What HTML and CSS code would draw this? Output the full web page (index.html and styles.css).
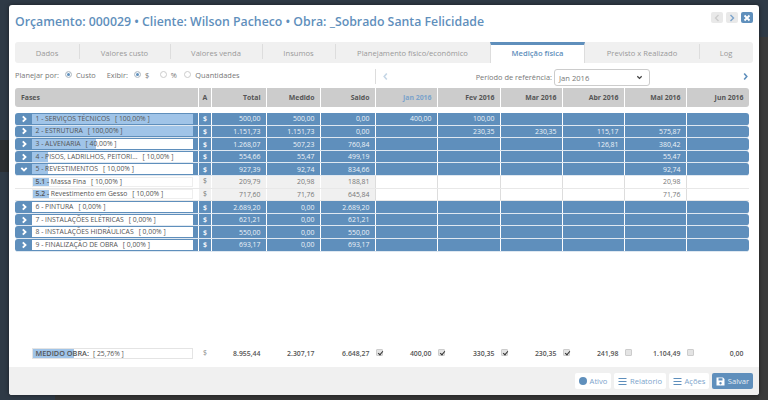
FILE: index.html
```html
<!DOCTYPE html>
<html lang="pt">
<head>
    <meta charset="UTF-8">
    <title>Orçamento</title>
    <link rel="stylesheet" href="styles.css">
</head>
<body>
    <div class="modal">
        <div class="modal-head">
            <h1 class="title">Orçamento: 000029 • Cliente: Wilson Pacheco • Obra: _Sobrado Santa Felicidade</h1>
            <div class="head-btns">
                <span class="hbtn off"><svg viewBox="0 0 8 8"><path d="M5.500 1 2.500 4l3 3" /></svg></span>
                <span class="hbtn"><svg viewBox="0 0 8 8"><path d="M2.500 1l3 3-3 3" /></svg></span>
                <span class="hbtn close"><svg viewBox="0 0 8 8"><path d="M1.500 1.500l5 5M6.500 1.500l-5 5" /></svg></span>
            </div>
        </div>

        <ul class="tabs">
            <li class="t1">Dados</li>
            <li class="t2">Valores custo</li>
            <li class="t3">Valores venda</li>
            <li class="t4">Insumos</li>
            <li class="t5">Planejamento físico/econômico</li>
            <li class="t6 current">Medição física</li>
            <li class="t7">Previsto x Realizado</li>
            <li class="t8">Log</li>
        </ul>

        <div class="options">
            <div class="opts-left">
                <span>Planejar por:</span>
                <span class="radio on"></span><span class="opt-custo">Custo</span>
                <span>Exibir:</span>
                <span class="radio on"></span><span class="opt-din">$</span>
                <span class="radio"></span><span class="opt-pct">%</span>
                <span class="radio"></span><span>Quantidades</span>
            </div>
            <div class="opts-right">
                <svg class="nav off" viewBox="0 0 8 10"><path d="M5.500 1.500 2.500 5l3 3.500" /></svg>
                <span class="periodo">Período de referência:</span>
                <span class="select">Jan 2016<svg viewBox="0 0 8 8"><path d="M1.500 2.500 4 5l2.500-2.500" /></svg></span>
                <svg class="nav" viewBox="0 0 8 10"><path d="M2.500 1.500l3 3.500-3 3.500" /></svg>
            </div>
        </div>

        <div class="grid head-row">
            <div class="fases">Fases</div>
            <div class="c-a">A</div>
            <div>Total</div>
            <div>Medido</div>
            <div>Saldo</div>
            <div class="month-now">Jan 2016</div>
            <div>Fev 2016</div>
            <div>Mar 2016</div>
            <div>Abr 2016</div>
            <div>Mai 2016</div>
            <div>Jun 2016</div>
        </div>

        <div class="rows">
            <div class="grid row">
                <div class="fases"><span class="toggle"><svg viewBox="0 0 8 8"><path d="M2.800 1.300 5.500 4 2.800 6.700" /></svg></span><span class="bar"><span class="fill" style="width:100%"></span><span class="label">1 - SERVIÇOS TÉCNICOS<i>[ 100,00% ]</i></span></span></div>
                <div class="c-a">$</div><div>500,00</div><div>500,00</div><div>0,00</div><div>400,00</div><div>100,00</div><div></div><div></div><div></div><div></div>
            </div>
            <div class="grid row">
                <div class="fases"><span class="toggle"><svg viewBox="0 0 8 8"><path d="M2.800 1.300 5.500 4 2.800 6.700" /></svg></span><span class="bar"><span class="fill" style="width:100%"></span><span class="label">2 - ESTRUTURA<i>[ 100,00% ]</i></span></span></div>
                <div class="c-a">$</div><div>1.151,73</div><div>1.151,73</div><div>0,00</div><div></div><div>230,35</div><div>230,35</div><div>115,17</div><div>575,87</div><div></div>
            </div>
            <div class="grid row">
                <div class="fases"><span class="toggle"><svg viewBox="0 0 8 8"><path d="M2.800 1.300 5.500 4 2.800 6.700" /></svg></span><span class="bar"><span class="fill" style="width:40%"></span><span class="label">3 - ALVENARIA<i>[ 40,00% ]</i></span></span></div>
                <div class="c-a">$</div><div>1.268,07</div><div>507,23</div><div>760,84</div><div></div><div></div><div></div><div>126,81</div><div>380,42</div><div></div>
            </div>
            <div class="grid row">
                <div class="fases"><span class="toggle"><svg viewBox="0 0 8 8"><path d="M2.800 1.300 5.500 4 2.800 6.700" /></svg></span><span class="bar"><span class="fill" style="width:10%"></span><span class="label">4 - PISOS, LADRILHOS, PEITORI...<i>[ 10,00% ]</i></span></span></div>
                <div class="c-a">$</div><div>554,66</div><div>55,47</div><div>499,19</div><div></div><div></div><div></div><div></div><div>55,47</div><div></div>
            </div>
            <div class="grid row">
                <div class="fases"><span class="toggle"><svg viewBox="0 0 8 8"><path d="M1.300 2.800 4 5.500 6.700 2.800" /></svg></span><span class="bar"><span class="fill" style="width:10%"></span><span class="label">5 - REVESTIMENTOS<i>[ 10,00% ]</i></span></span></div>
                <div class="c-a">$</div><div>927,39</div><div>92,74</div><div>834,66</div><div></div><div></div><div></div><div></div><div>92,74</div><div></div>
            </div>
            <div class="grid row sub">
                <div class="fases"><span class="bar"><span class="fill" style="width:10%"></span><span class="label"><b>5.1 -</b> Massa Fina<i>[ 10,00% ]</i></span></span></div>
                <div class="c-a">$</div><div>209,79</div><div>20,98</div><div>188,81</div><div></div><div></div><div></div><div></div><div>20,98</div><div></div>
            </div>
            <div class="grid row sub">
                <div class="fases"><span class="bar"><span class="fill" style="width:10%"></span><span class="label"><b>5.2 -</b> Revestimento em Gesso<i>[ 10,00% ]</i></span></span></div>
                <div class="c-a">$</div><div>717,60</div><div>71,76</div><div>645,84</div><div></div><div></div><div></div><div></div><div>71,76</div><div></div>
            </div>
            <div class="grid row">
                <div class="fases"><span class="toggle"><svg viewBox="0 0 8 8"><path d="M2.800 1.300 5.500 4 2.800 6.700" /></svg></span><span class="bar"><span class="label">6 - PINTURA<i>[ 0,00% ]</i></span></span></div>
                <div class="c-a">$</div><div>2.689,20</div><div>0,00</div><div>2.689,20</div><div></div><div></div><div></div><div></div><div></div><div></div>
            </div>
            <div class="grid row">
                <div class="fases"><span class="toggle"><svg viewBox="0 0 8 8"><path d="M2.800 1.300 5.500 4 2.800 6.700" /></svg></span><span class="bar"><span class="label">7 - INSTALAÇÕES ELÉTRICAS<i>[ 0,00% ]</i></span></span></div>
                <div class="c-a">$</div><div>621,21</div><div>0,00</div><div>621,21</div><div></div><div></div><div></div><div></div><div></div><div></div>
            </div>
            <div class="grid row">
                <div class="fases"><span class="toggle"><svg viewBox="0 0 8 8"><path d="M2.800 1.300 5.500 4 2.800 6.700" /></svg></span><span class="bar"><span class="label">8 - INSTALAÇÕES HIDRÁULICAS<i>[ 0,00% ]</i></span></span></div>
                <div class="c-a">$</div><div>550,00</div><div>0,00</div><div>550,00</div><div></div><div></div><div></div><div></div><div></div><div></div>
            </div>
            <div class="grid row">
                <div class="fases"><span class="toggle"><svg viewBox="0 0 8 8"><path d="M2.800 1.300 5.500 4 2.800 6.700" /></svg></span><span class="bar"><span class="label">9 - FINALIZAÇÃO DE OBRA<i>[ 0,00% ]</i></span></span></div>
                <div class="c-a">$</div><div>693,17</div><div>0,00</div><div>693,17</div><div></div><div></div><div></div><div></div><div></div><div></div>
            </div>
        </div>

        <div class="grid total-row">
            <div class="fases"><span class="bar"><span class="fill" style="width:25.76%"></span><span class="label"><b>MEDIDO OBRA:</b><i>[ 25,76% ]</i></span></span></div>
            <div class="c-a">$</div>
            <div>8.955,44</div>
            <div>2.307,17</div>
            <div class="has-check">6.648,27<span class="check on"></span></div>
            <div class="has-check">400,00<span class="check on"></span></div>
            <div class="has-check">330,35<span class="check on"></span></div>
            <div class="has-check">230,35<span class="check on"></span></div>
            <div class="has-check">241,98<span class="check"></span></div>
            <div class="has-check">1.104,49<span class="check"></span></div>
            <div>0,00</div>
        </div>

        <div class="modal-foot">
            <span class="btn b-ativo"><span class="dot"></span>Ativo</span>
            <span class="btn b-rel"><svg viewBox="0 0 9 8"><path d="M.5 1h8M.5 4h8M.5 7h8" /></svg>Relatorio</span>
            <span class="btn b-acoes"><svg viewBox="0 0 9 8"><path d="M.5 1h8M.5 4h8M.5 7h8" /></svg>Ações</span>
            <span class="btn save"><svg viewBox="0 0 9 9"><path class="solid" d="M1 .5h6l1.500 1.500v6.500h-8v-8zM2.500 1.200v2.300h4V1.200zM4.500 5a1.200 1.200 0 1 0 .01 0z" /></svg>Salvar</span>
        </div>
    </div>
</body>
</html>
```

FILE: styles.css
```css
*{
    margin: 0;
    padding: 0;
    box-sizing: border-box;
}

ul{
    list-style-type: none;
}

body{
    width: 768px;
    height: 400px;
    overflow: hidden;
    background:
        linear-gradient(#3a3a3a, #3a3a3a) right 37px / 9px 100% no-repeat,
        linear-gradient(#353535, #353535) right bottom / 713px 5px no-repeat,
        linear-gradient(#2b2e31, #2b2e31) 0 140px / 9px 32px no-repeat,
        #2f3a46;
    font-family: "Open Sans", "Liberation Sans", sans-serif;
    font-size: 7.400px;
    color: #666;
    padding: 5px 0 0 9px;
}

.modal{
    width: 750px;
    height: 390px;
    background: #fff;
    border-radius: 3px;
    box-shadow: 0 0 4px rgba(0,0,0,.5);
    display: flex;
    flex-direction: column;
    overflow: hidden;
}

/* cabeçalho */
.modal-head{
    height: 37px;
    padding: 4px 6px 0 6px;
    display: flex;
    justify-content: space-between;
}

.title{
    font-size: 12.300px;
    font-weight: 600;
    color: #5f8fbc;
    line-height: 26px;
    white-space: nowrap;
}

.head-btns{
    display: flex;
    gap: 3px;
    padding-top: 3px;
}

.hbtn{
    width: 12px;
    height: 11px;
    background: #e9e9e9;
    border-radius: 2px;
    display: flex;
    align-items: center;
    justify-content: center;
}

.hbtn svg{
    width: 8px;
    height: 8px;
    fill: none;
    stroke: #7ba3cb;
    stroke-width: 1.400;
}

.hbtn.off svg{
    stroke: #ccc;
}

.hbtn.close{
    background: #5f8fbc;
}

.hbtn.close svg{
    stroke: #fff;
    stroke-width: 1.800;
}

/* abas */
.tabs{
    margin: 0 6px;
    width: 738px;
    height: 21px;
    background: #f0f0f0;
    border-radius: 3px;
    display: flex;
    font-size: 7.600px;
    color: #999;
    flex: none;
}

.tabs li{
    display: flex;
    align-items: center;
    justify-content: center;
    position: relative;
}

.tabs li + li:not(.current):not(.t7)::before{
    content: "";
    position: absolute;
    left: 0;
    top: 2px;
    bottom: 4px;
    width: 1px;
    background: #ddd;
}

.t1{ width: 64px; }
.t2{ width: 91px; }
.t3{ width: 92px; }
.t4{ width: 73px; }
.t5{ width: 155px; }
.t6{ width: 95px; }
.t7{ width: 114px; }
.t8{ width: 54px; }

.tabs li.current{
    background: #fff;
    border-top: 3px solid #5f8fbc;
    border-left: 1px solid #ddd;
    border-right: 1px solid #ddd;
    padding-bottom: 2px;
    color: #5f8fbc;
    font-weight: 600;
}

/* opções */
.options{
    height: 25px;
    padding: 6px 4px 0 6px;
    display: flex;
    color: #777;
    flex: none;
}

.opts-left{
    width: 360px;
    height: 11px;
    display: flex;
    align-items: center;
    white-space: nowrap;
}

.radio{
    width: 7px;
    height: 7px;
    border: 1px solid #ccc;
    border-radius: 50%;
    background: #fff;
    margin: 0 4px 0 6px;
}

.radio.on{
    box-shadow: inset 0 0 0 1px #fff;
    background: #5f8fbc;
}

.opt-custo{
    margin-right: 11px;
}

.opt-din{
    margin-right: 4.500px;
}

.opt-pct{
    margin-right: 1.500px;
}

.opts-right{
    flex: 1;
    height: 15px;
    border-left: 1px solid #ddd;
    display: flex;
    align-items: center;
    padding: 0 6px 0 6px;
}

.nav{
    width: 7px;
    height: 9px;
    fill: none;
    stroke: #5f8fbc;
    stroke-width: 1.800;
}

.nav.off{
    stroke: #c5d6e6;
}

.periodo{
    margin-left: auto;
    margin-right: 2px;
}

.select{
    width: 96px;
    height: 17px;
    border: 1px solid #ccc;
    border-radius: 3px;
    background: #fff;
    font-size: 7.600px;
    padding: 0 6px 0 4px;
    margin: 2px 92px 0 0;
    display: flex;
    align-items: center;
    justify-content: space-between;
}

.select svg{
    width: 7px;
    height: 7px;
    fill: none;
    stroke: #444;
    stroke-width: 1.500;
}

/* tabela */
.grid{
    display: grid;
    grid-template-columns: 183px 13px 55px 54px 55px 62px 63px 62px 62px 62px 63px;
    margin-left: 6px;
    width: 734px;
    font-size: 6.900px;
    flex: none;
}

.grid > div{
    display: flex;
    align-items: center;
    justify-content: flex-end;
    padding-right: 5.500px;
    white-space: nowrap;
    border-left: 1px solid #fff;
}

.grid > .fases{
    justify-content: flex-start;
    border-left: 0;
    padding-right: 0;
}

.grid > .c-a{
    justify-content: center;
    padding-right: 0;
}

.head-row{
    height: 19px;
    background: #ccc;
    border-radius: 3px;
    color: #555;
    font-weight: 700;
}

.head-row .fases{
    padding-left: 6px;
}

.head-row .month-now{
    color: #7ba3cb;
}

.rows{
    margin-top: 6px;
    flex: 1;
}

.row{
    height: 12.620px;
    background: #5f8fbc;
    border-bottom: 1px solid #dfe8f1;
    border-radius: 3px;
    color: #eef3f8;
}

.row > .c-a{
    font-weight: 700;
}

.toggle{
    width: 17px;
    display: flex;
    justify-content: center;
}

.toggle svg{
    width: 8px;
    height: 8px;
    fill: none;
    stroke: #fff;
    stroke-width: 1.900;
}

.bar{
    width: 161px;
    height: 10px;
    background: #fff;
    position: relative;
    display: block;
    color: #555;
    flex: none;
    font-size: 6.800px;
}

.fill{
    position: absolute;
    left: 0;
    top: 0;
    bottom: 0;
    background: #a0c4e8;
}

.label{
    position: relative;
    padding-left: 3.500px;
    line-height: 10px;
    display: block;
}

.label i{
    font-style: normal;
    margin-left: 5px;
}

.label b{
    font-weight: 600;
}

.sub{
    background: #fff;
    border-radius: 0;
    border-bottom: 1px solid #e8e8e8;
    color: #777;
}

.sub .fases{
    padding-left: 17px;
}

.sub .bar{
    border: 1px solid #eee;
}

.sub .label{
    line-height: 8px;
    padding-left: 2.500px;
}

.sub > div:nth-child(n+2):nth-child(-n+5){
    background: #f0f0f0;
}

.sub > div:nth-child(n+6){
    border-left: 1px solid #ddd;
}

.sub > .c-a{
    font-weight: 400;
}

.total-row{
    height: 14px;
    margin-bottom: 7px;
    color: #555;
    font-weight: 600;
}

.total-row .fases{
    padding-left: 17px;
}

.total-row .bar{
    height: 11px;
    border: 1px solid #e4e4e4;
    font-weight: 400;
}

.total-row .label{
    line-height: 9px;
    padding-left: 2.500px;
}

.total-row .label b{
    font-size: 7.300px;
}

.total-row .label i{
    margin-left: 4px;
}

.total-row .c-a{
    color: #888;
    font-weight: 400;
}

.has-check{
    position: relative;
}

.check{
    position: absolute;
    right: -8px;
    top: 3px;
    width: 7px;
    height: 7px;
    background: #e4e4e4;
    border: 1px solid #ccc;
    border-radius: 1px;
}

.check.on::after{
    content: "";
    position: absolute;
    left: 1.500px;
    top: 0;
    width: 2px;
    height: 4px;
    border: solid #333;
    border-width: 0 1px 1px 0;
    transform: rotate(40deg);
}

/* rodapé */
.modal-foot{
    height: 28px;
    background: #f0f0f0;
    display: flex;
    justify-content: flex-end;
    align-items: center;
    gap: 3px;
    padding: 0 6px 0 0;
    flex: none;
}

.btn{
    height: 16px;
    background: #fff;
    border-radius: 2px;
    color: #7ba3cb;
    font-size: 7.600px;
    display: flex;
    align-items: center;
    justify-content: center;
    gap: 3px;
}

.b-ativo{ width: 36px; }
.b-rel{ width: 52px; }
.b-acoes{ width: 40px; }

.btn svg{
    width: 9px;
    height: 9px;
    fill: none;
    stroke: #5f8fbc;
    stroke-width: 1.100;
}

.dot{
    width: 8px;
    height: 8px;
    border-radius: 50%;
    background: #5f8fbc;
}

.btn.save{
    width: 41px;
    background: #5f8fbc;
    color: #e6eef6;
}

.btn.save svg{
    stroke: none;
}

.btn.save .solid{
    fill: #fff;
    fill-rule: evenodd;
}
```
